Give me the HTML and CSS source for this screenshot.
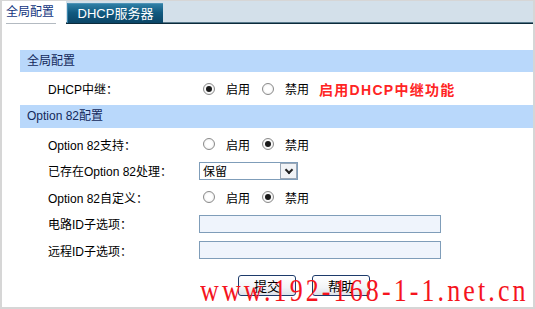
FILE: index.html
```html
<!DOCTYPE html>
<html lang="zh-CN">

<head>
    <meta charset="UTF-8">
    <title>DHCP中继</title>
    <link rel="stylesheet" href="styles.css">
</head>

<body>
    <div class="frame">
        <div class="tabs">
            <div class="tab current"><span>全局配置</span></div>
            <div class="tab">DHCP服务器</div>
        </div>
        <div class="content">
            <div class="head">全局配置</div>
            <div class="row main">
                <div class="lbl">DHCP中继：</div>
                <div class="ctl">
                    <span class="radio on"></span><span class="opt">启用</span>
                    <span class="radio"></span><span class="opt">禁用</span>
                    <span class="hint">启用DHCP中继功能</span>
                </div>
            </div>
            <div class="head tall">Option 82配置</div>
            <div class="group">
                <div class="row">
                    <div class="lbl">Option 82支持：</div>
                    <div class="ctl">
                        <span class="radio"></span><span class="opt">启用</span>
                        <span class="radio on"></span><span class="opt">禁用</span>
                    </div>
                </div>
                <div class="row">
                    <div class="lbl">已存在Option 82处理：</div>
                    <div class="ctl">
                        <div class="select"><span>保留</span><i class="arrow"></i></div>
                    </div>
                </div>
                <div class="row">
                    <div class="lbl">Option 82自定义：</div>
                    <div class="ctl">
                        <span class="radio"></span><span class="opt">启用</span>
                        <span class="radio on"></span><span class="opt">禁用</span>
                    </div>
                </div>
                <div class="row">
                    <div class="lbl">电路ID子选项：</div>
                    <div class="ctl"><input class="text" type="text"></div>
                </div>
                <div class="row">
                    <div class="lbl">远程ID子选项：</div>
                    <div class="ctl"><input class="text" type="text"></div>
                </div>
            </div>
            <div class="btns">
                <button class="btn">提交</button>
                <button class="btn">帮助</button>
            </div>
        </div>
        <div class="mark">www.192-168-1-1.net.cn</div>
    </div>
</body>

</html>
```

FILE: styles.css
```css
* {
    padding: 0;
    margin: 0;
    box-sizing: border-box;
}

body {
    font-family: "Liberation Sans", "Noto Sans CJK SC", sans-serif;
    font-size: 12px;
    color: #000;
    background: #fff;
}

.frame {
    position: relative;
    width: 535px;
    height: 309px;
    border-top: 1px solid #d6d6d6;
    border-left: 2px solid #d6d6d6;
    border-right: 2px solid #d6d6d6;
    border-bottom: 2px solid #d6d6d6;
    overflow: hidden;
}

/* tabs */
.tabs {
    display: flex;
    align-items: flex-start;
    height: 23px;
    background: #d3e0ea;
    border-bottom: 1px solid #0b2b3b;
    box-shadow: inset 0 -1px 0 #58798b;
}

.tab {
    height: 20px;
    margin-top: 2px;
    margin-left: 1px;
    width: 96px;
    line-height: 20px;
    text-align: center;
    font-size: 13px;
    white-space: nowrap;
    color: #fff;
    background: linear-gradient(#2f7fa6, #115a80 45%, #0b4566);
    border-top: 1px solid #4f93b6;
    border-left: 1px solid #3a86ad;
}

.tab.current {
    width: 64px;
    height: 23px;
    margin: 0;
    border: 0;
    padding-left: 4px;
    text-align: left;
    font-size: 12px;
    background: #fff;
    color: #12357e;
}

.tab.current span {
    display: inline-block;
    margin-top: 1px;
    width: 50px;
    line-height: 21px;
    border-bottom: 1px solid #b3bac1;
}

/* content */
.content {
    padding: 26px 0 0 18px;
}

.head {
    height: 22px;
    line-height: 22px;
    padding-left: 7px;
    background: #b9d8fb;
    color: #13285a;
}

.head.tall {
    height: 23px;
    line-height: 23px;
}

.row {
    display: flex;
    align-items: center;
    height: 26.5px;
}

.row.main {
    height: 33px;
}

.group {
    padding-top: 3px;
}

.lbl {
    width: 179px;
    padding-left: 28px;
}

.ctl {
    display: flex;
    align-items: center;
}

.radio {
    width: 12px;
    height: 12px;
    margin-left: 4px;
    border-radius: 50%;
    border: 1px solid #8a8a8a;
    background: radial-gradient(#fff 40%, #e6e6e6);
    position: relative;
}

.radio + .opt + .radio {
    margin-left: 12px;
}

.radio.on::after {
    content: "";
    position: absolute;
    left: 2px;
    top: 2px;
    width: 6px;
    height: 6px;
    border-radius: 50%;
    background: #1a1a1a;
}

.opt {
    margin-left: 11px;
    width: 24px;
}

.hint {
    margin-left: 10px;
    font-size: 14px;
    font-weight: bold;
    letter-spacing: 1.3px;
    color: #ff2424;
}

.select {
    display: flex;
    align-items: center;
    width: 99px;
    height: 18px;
    border: 1px solid #7f9db9;
    background: #fff;
    padding-left: 3px;
}

.select span {
    flex: 1;
}

.arrow {
    width: 17px;
    height: 16px;
    border: 1px solid #9aa7b6;
    background: #f1f3f6;
    position: relative;
}

.arrow::after {
    content: "";
    position: absolute;
    left: 5px;
    top: 3px;
    width: 4px;
    height: 4px;
    border-right: 2px solid #222;
    border-bottom: 2px solid #222;
    transform: rotate(45deg);
}

.text {
    width: 242px;
    height: 18px;
    border: 1px solid #7f9db9;
    background: #eff4fc;
    outline: none;
}

.btns {
    display: flex;
    gap: 16px;
    margin: 11.5px 0 0 218px;
}

.btn {
    width: 58px;
    height: 21px;
    border: 1px solid #1d3b6b;
    border-radius: 3px;
    background: linear-gradient(#fff, #f2f4f7 60%, #dde3ea);
    font-family: "Liberation Sans", "Noto Sans CJK SC", sans-serif;
    font-size: 13px;
    color: #000;
}

/* watermark */
.mark {
    position: absolute;
    left: 198px;
    top: 279px;
    font-family: "Liberation Serif", serif;
    font-size: 26px;
    line-height: 26px;
    letter-spacing: 3.1px;
    color: #f5141e;
    white-space: nowrap;
    transform: scaleY(1.25);
    transform-origin: 0 22px;
}
```
